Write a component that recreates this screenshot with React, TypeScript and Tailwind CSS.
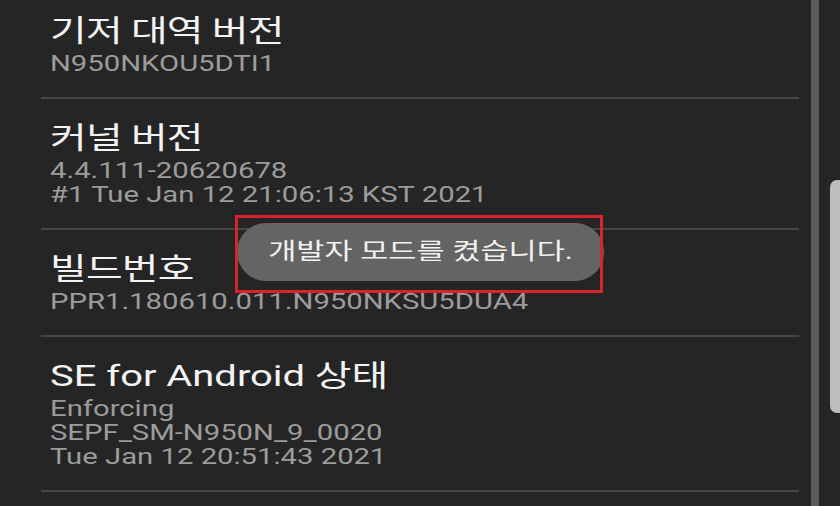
const items = [
  { title: "기저 대역 버전", lines: ["N950NKOU5DTI1"], ko: true },
  { title: "커널 버전", lines: ["4.4.111-20620678", "#1 Tue Jan 12 21:06:13 KST 2021"], ko: true },
  { title: "빌드번호", lines: ["PPR1.180610.011.N950NKSU5DUA4"], ko: true },
  {
    title: "SE for Android 상태",
    lines: ["Enforcing", "SEPF_SM-N950N_9_0020", "Tue Jan 12 20:51:43 2021"],
    ko: false,
  },
];

const font = { fontFamily: "Roboto, 'Noto Sans CJK KR', sans-serif" };

const App = () => {
  return (
    <div className="relative w-[840px] h-[506px] overflow-hidden bg-[#252525]" style={font}>
      <div className="flex h-full">
        {/* List */}
        <div className="ml-[41px] w-[758px]">
          {items.map((item, i) => (
            <div key={item.title}>
              {i > 0 && <div className="h-[2px] bg-[#464646]" />}
              <div className={`pl-[9px] pb-[21px] ${i === 0 ? "pt-[14px]" : "pt-[22px]"}`}>
                <div className="origin-left scale-x-[1.33] whitespace-nowrap">
                  <div
                    className={`text-[30px] leading-[34px] text-[#f4f4f4] ${
                      item.ko ? "tracking-[-0.6px]" : ""
                    }`}
                  >
                    {item.title}
                  </div>
                  <div className="mt-[4px] text-[22px] leading-[24px] text-[#9c9c9c]">
                    {item.lines.map((line) => (
                      <div key={line}>{line}</div>
                    ))}
                  </div>
                </div>
              </div>
            </div>
          ))}
          <div className="h-[2px] bg-[#464646]" />
        </div>

        {/* Scroll track */}
        <div className="ml-[12px] w-[8px] h-full bg-[#5a5a5a]" />
        <div className="ml-[11px] flex-1">
          <div className="mt-[180px] h-[233px] rounded-l-[7px] bg-[#bdbdbd]" />
        </div>
      </div>

      {/* Toast */}
      <div className="absolute left-[237px] top-[223px] w-[367px] h-[58px] rounded-full bg-[#646464] flex items-center justify-center">
        <div className="scale-x-[1.33] whitespace-nowrap text-[23px] leading-[26px] text-[#f2f2f2]">
          개발자 모드를 켰습니다.
        </div>
      </div>

      {/* Annotation box */}
      <div className="absolute left-[235px] top-[215px] w-[368px] h-[78px] border-[3px] border-[#d8222c]" />
    </div>
  );
};

export default App;
